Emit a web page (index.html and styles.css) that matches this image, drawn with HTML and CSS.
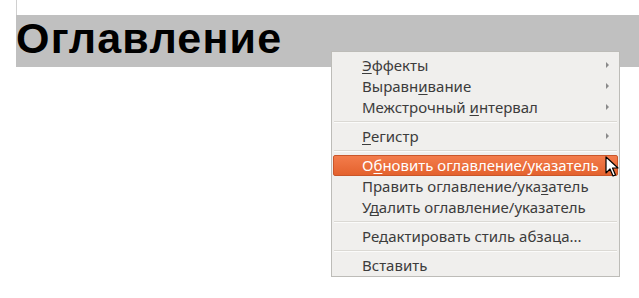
FILE: index.html
```html
<!DOCTYPE html>
<html lang="ru">
<head>
    <meta charset="UTF-8">
    <title>Оглавление</title>
    <link rel="stylesheet" href="styles.css">
</head>
<body>
    <div class="page">
        <div class="margin-line"></div>
        <h1 class="heading">Оглавление</h1>
    </div>

    <div class="menu">
        <div class="item">
            <span><u>Э</u>ффекты</span>
            <span class="arrow"></span>
        </div>
        <div class="item">
            <span>Выравн<u>и</u>вание</span>
            <span class="arrow"></span>
        </div>
        <div class="item">
            <span>Межстрочный <u>и</u>нтервал</span>
            <span class="arrow"></span>
        </div>
        <div class="sep"></div>
        <div class="item">
            <span><u>Р</u>егистр</span>
            <span class="arrow"></span>
        </div>
        <div class="sep"></div>
        <div class="item active">
            <span>О<u>б</u>новить оглавление/указатель</span>
        </div>
        <div class="item">
            <span>Править оглавление/ука<u>з</u>атель</span>
        </div>
        <div class="item">
            <span>У<u>д</u>алить оглавление/указатель</span>
        </div>
        <div class="sep"></div>
        <div class="item">
            <span>Редактировать стиль абзаца...</span>
        </div>
        <div class="sep"></div>
        <div class="item">
            <span>Вставить</span>
        </div>
    </div>

    <!-- mouse pointer -->
    <svg class="cursor" width="14" height="22" viewBox="0 0 14 22">
        <path d="M1 1 L1 17 L5 13 L8 20 L10.5 19 L7.5 12 L13 12 Z" fill="#fff" stroke="#000" stroke-width="1.2" stroke-linejoin="round"/>
    </svg>
</body>
</html>
```

FILE: styles.css
```css
body {
    margin: 0;
    padding: 0;
    background-color: #fff;
    font-family: "Noto Sans", "DejaVu Sans", sans-serif;
}
.page {
    padding-left: 16px;
}
.margin-line {
    width: 0;
    height: 15px;
    border-left: 1px solid #d0d0d0;
}
.heading {
    margin: 0;
    height: 52px;
    line-height: 47px;
    background-color: #c0c0c0;
    color: #000;
    font-family: "Liberation Sans", Arial, sans-serif;
    font-size: 43px;
    font-weight: 700;
    letter-spacing: 1.2px;
    padding-left: 0;
}
.menu {
    position: absolute;
    left: 331px;
    top: 51px;
    width: 285px;
    padding: 3px 1px 0 1px;
    background-color: #f0efed;
    border: 1px solid #bdbcb8;
    font-size: 15px;
    color: #3c3c3c;
}
.item {
    box-sizing: border-box;
    display: flex;
    justify-content: space-between;
    align-items: center;
    height: 21px;
    padding: 0 8px 1px 28px;
    border: 1px solid transparent;
    border-radius: 2px;
}
.item u {
    text-decoration-thickness: 1px;
    text-underline-offset: 2px;
}
.item.active {
    color: #fff;
    background: linear-gradient(#f37c4b, #e4622e);
    border-color: #c9562a;
}
.arrow {
    width: 0;
    height: 0;
    border-top: 3px solid transparent;
    border-bottom: 3px solid transparent;
    border-left: 3px solid #8a8a8a;
}
.sep {
    height: 1px;
    margin: 3px 1px 3px 1px;
    background-color: #dbd9d4;
    border-bottom: 1px solid #fbfbfa;
}
.cursor {
    position: absolute;
    left: 605px;
    top: 156px;
}
```
